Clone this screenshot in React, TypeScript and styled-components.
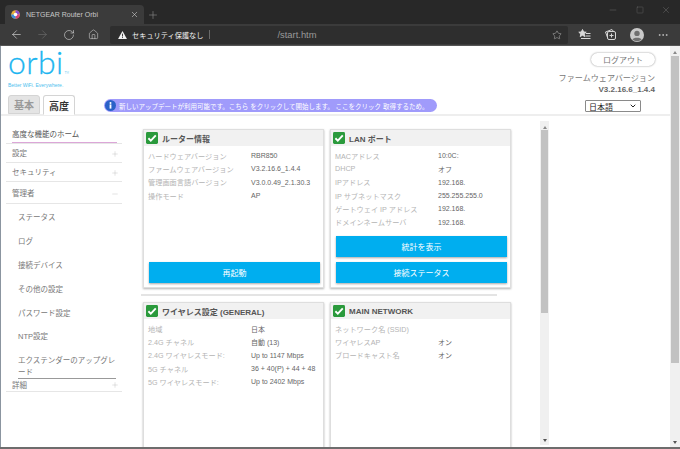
import * as React from 'react';
import styled, { createGlobalStyle } from 'styled-components';
import { ArrowLeft, ArrowRight, ChevronDown, Home, Minus, MoreHorizontal, Plus, RotateCw, Square, Star, X } from 'lucide-react';

const GlobalStyle = createGlobalStyle`
    html, body {
        margin: 0;
        padding: 0;
        background: #fff;
        overflow: hidden;
    }
    * {
        box-sizing: border-box;
    }
    body {
        font-family: 'Liberation Sans', 'Noto Sans CJK JP', sans-serif;
    }
`;

type Row = { label: string; value?: string };

const routerRows: Row[] = [
    { label: 'ハードウェアバージョン', value: 'RBR850' },
    { label: 'ファームウェアバージョン', value: 'V3.2.16.6_1.4.4' },
    { label: '管理画面言語バージョン', value: 'V3.0.0.49_2.1.30.3' },
    { label: '操作モード', value: 'AP' },
];

const lanRows: Row[] = [
    { label: 'MACアドレス', value: '10:0C:' },
    { label: 'DHCP', value: 'オフ' },
    { label: 'IPアドレス', value: '192.168.' },
    { label: 'IP サブネットマスク', value: '255.255.255.0' },
    { label: 'ゲートウェイ IP アドレス', value: '192.168.' },
    { label: 'ドメインネームサーバ', value: '192.168.' },
];

const wirelessRows: Row[] = [
    { label: '地域', value: '日本' },
    { label: '2.4G チャネル', value: '自動 (13)' },
    { label: '2.4G ワイヤレスモード:', value: 'Up to 1147 Mbps' },
    { label: '5G チャネル', value: '36 + 40(P) + 44 + 48' },
    { label: '5G ワイヤレスモード:', value: 'Up to 2402 Mbps' },
];

const networkRows: Row[] = [
    { label: 'ネットワーク名 (SSID)' },
    { label: 'ワイヤレスAP', value: 'オン' },
    { label: 'ブロードキャスト名', value: 'オン' },
];

const adminItems = ['ステータス', 'ログ', '接続デバイス', 'その他の設定', 'パスワード設定', 'NTP設定'];

const CheckBadge: React.FC = () => (
    <svg width="12" height="12" viewBox="0 0 13 13">
        <rect width="13" height="13" rx="1.5" fill="#2a9a3c" />
        <path d="M2.6 6.8 L5.2 9.4 L10.6 3.6" fill="none" stroke="#fff" strokeWidth="2" />
    </svg>
);

const Favicon: React.FC = () => (
    <svg width="9" height="9" viewBox="0 0 10 10">
        <circle cx="5" cy="5" r="4.8" fill="#e9b13c" />
        <path d="M5 5 L5 0.2 A4.8 4.8 0 0 1 9.8 5 Z" fill="#8a4fd0" />
        <path d="M5 5 L9.8 5 A4.8 4.8 0 0 1 5 9.8 Z" fill="#d8437c" />
        <path d="M5 5 L5 9.8 A4.8 4.8 0 0 1 0.2 5 Z" fill="#3c8fe0" />
        <circle cx="5" cy="5" r="2" fill="#fff" />
    </svg>
);

const FavoritesIcon: React.FC = () => (
    <svg width="13" height="13" viewBox="0 0 13 13" fill="none" stroke="#d6d6d6" strokeWidth="1">
        <path d="M4.5 1.5 L5.6 4 L8.2 4.2 L6.2 6 L6.8 8.6 L4.5 7.2 L2.2 8.6 L2.8 6 L0.8 4.2 L3.4 4 Z" fill="#d6d6d6" />
        <path d="M8 5.5 H12.5 M7.5 8 H12.5 M3 10.5 H12.5" />
    </svg>
);

const CollectionsIcon: React.FC = () => (
    <svg width="13" height="13" viewBox="0 0 13 13" fill="none" stroke="#d6d6d6" strokeWidth="1">
        <rect x="3.5" y="3.5" width="8" height="8" rx="1.5" />
        <path d="M3.5 9.5 L1.5 4 L8 1.5 L9.5 3.5" />
        <path d="M7.5 5.5 V9.5 M5.5 7.5 H9.5" />
    </svg>
);

const Avatar: React.FC = () => (
    <svg width="14" height="14" viewBox="0 0 14 14">
        <circle cx="7" cy="7" r="7" fill="#c9c9c9" />
        <circle cx="7" cy="5.4" r="2.7" fill="#6f6f6f" />
        <path d="M2.4 11.6 C3.4 9 10.6 9 11.6 11.6 A7 7 0 0 1 2.4 11.6 Z" fill="#6f6f6f" />
    </svg>
);

const InfoDot: React.FC = () => (
    <InfoDotSvg viewBox="0 0 11 11">
        <circle cx="5.5" cy="5.5" r="5.5" fill="#2a62c8" />
        <circle cx="5.5" cy="2.9" r="1" fill="#fff" />
        <rect x="4.6" y="4.4" width="1.8" height="4.2" fill="#fff" />
    </InfoDotSvg>
);

const InfoCard: React.FC<{ title: string; rows: Row[]; actions?: string[]; tall?: boolean }> = ({ title, rows, actions, tall }) => (
    <Card $tall={tall}>
        <CardHeader>
            <CheckBadge />
            <CardTitle>{title}</CardTitle>
        </CardHeader>
        <CardRows>
            {rows.map(r => (
                <InfoRow key={r.label}>
                    <InfoLabel>{r.label}</InfoLabel>
                    <InfoValue>{r.value}</InfoValue>
                </InfoRow>
            ))}
        </CardRows>
        {actions && (
            <CardActions>
                {actions.map(a => (
                    <ActionButton key={a}>{a}</ActionButton>
                ))}
            </CardActions>
        )}
    </Card>
);

const App: React.FC = () => (
    <Window>
        <GlobalStyle />
        <TabStrip>
            <Tab>
                <Favicon />
                <TabTitle>NETGEAR Router Orbi</TabTitle>
                <X size={9} color="#d0d0d0" strokeWidth={1.6} />
            </Tab>
            <NewTab>
                <Plus size={12} strokeWidth={1.2} />
            </NewTab>
            <WindowControls>
                <Minus size={10} strokeWidth={1} />
                <Square size={8} strokeWidth={1} />
                <X size={10} strokeWidth={1} />
            </WindowControls>
        </TabStrip>
        <Toolbar>
            <NavButtons>
                <ArrowLeft size={13} strokeWidth={1.2} />
                <DimIcon>
                    <ArrowRight size={13} strokeWidth={1.2} />
                </DimIcon>
                <RotateCw size={12} strokeWidth={1.2} />
                <Home size={11} strokeWidth={1.2} />
            </NavButtons>
            <AddressBar>
                <WarnIcon viewBox="0 0 10 9">
                    <path d="M5 0 L10 9 H0 Z" fill="#f2f2f2" />
                    <rect x="4.5" y="3" width="1" height="3.2" fill="#2b2b2b" />
                    <rect x="4.5" y="6.9" width="1" height="1" fill="#2b2b2b" />
                </WarnIcon>
                <SecurityText>セキュリティ保護なし</SecurityText>
                <AddressDivider />
                <UrlText>/start.htm</UrlText>
                <Star size={10} color="#bdbdbd" strokeWidth={1.2} />
            </AddressBar>
            <ToolIcons>
                <FavoritesIcon />
                <CollectionsIcon />
                <Avatar />
                <MoreHorizontal size={12} strokeWidth={1.4} />
            </ToolIcons>
        </Toolbar>
        <Viewport>
            <Page>
                <Header>
                    <HeaderTop>
                        <Brand>
                            <Logo>
                                orbi<LogoMark>TM</LogoMark>
                            </Logo>
                            <Tagline>Better WiFi. Everywhere.</Tagline>
                        </Brand>
                        <Account>
                            <LogoutButton>ログアウト</LogoutButton>
                            <FirmwareLabel>ファームウェアバージョン</FirmwareLabel>
                            <FirmwareValue>V3.2.16.6_1.4.4</FirmwareValue>
                        </Account>
                    </HeaderTop>
                    <HeaderBottom>
                        <Tabs>
                            <ModeTab>基本</ModeTab>
                            <ModeTab $active>高度</ModeTab>
                        </Tabs>
                        <Notice>
                            <InfoDot />
                            <NoticeText>新しいアップデートが利用可能です。こちら をクリックして開始します。 ここをクリック 取得するため。</NoticeText>
                        </Notice>
                        <LanguageSelect>
                            日本語
                            <ChevronDown size={8} strokeWidth={3} color="#222" />
                        </LanguageSelect>
                    </HeaderBottom>
                </Header>
                <Body>
                    <Sidebar>
                        <HomeItem>
                            <span>高度な機能のホーム</span>
                        </HomeItem>
                        <MenuGroup>
                            設定
                            <Plus size={8} strokeWidth={1} />
                        </MenuGroup>
                        <MenuGroup>
                            セキュリティ
                            <Plus size={8} strokeWidth={1} />
                        </MenuGroup>
                        <MenuGroup $open>
                            管理者
                            <Minus size={8} strokeWidth={1} />
                        </MenuGroup>
                        <SubList>
                            {adminItems.map(item => (
                                <SubItem key={item}>{item}</SubItem>
                            ))}
                            <LastSubItem>エクステンダーのアップグレード</LastSubItem>
                        </SubList>
                        <MenuGroup $compact>
                            詳細
                            <Plus size={8} strokeWidth={1} />
                        </MenuGroup>
                    </Sidebar>
                    <Content>
                        <CardRow>
                            <InfoCard title="ルーター情報" rows={routerRows} actions={['再起動']} />
                            <InfoCard title="LAN ポート" rows={lanRows} actions={['統計を表示', '接続ステータス']} />
                        </CardRow>
                        <RowDivider />
                        <CardRow>
                            <InfoCard title="ワイヤレス設定 (GENERAL)" rows={wirelessRows} tall />
                            <InfoCard title="MAIN NETWORK" rows={networkRows} tall />
                        </CardRow>
                    </Content>
                    <InnerScrollbar>
                        <ArrowUp />
                        <InnerThumb />
                        <ArrowDown />
                    </InnerScrollbar>
                </Body>
            </Page>
            <OuterScrollbar>
                <ArrowUp />
                <OuterThumb />
                <ArrowDown />
            </OuterScrollbar>
        </Viewport>
    </Window>
);

export default App;

const Window = styled.div`
    width: 680px;
    height: 449px;
    display: flex;
    flex-direction: column;
    overflow: hidden;
    background: #fff;
    border-bottom: 2px solid #6d6d6d;
`;

const TabStrip = styled.div`
    height: 24px;
    flex: none;
    display: flex;
    align-items: flex-end;
    padding-left: 5px;
    background: #282828;
`;

const Tab = styled.div`
    width: 139px;
    height: 19px;
    display: flex;
    align-items: center;
    padding: 0 5px 0 6px;
    background: #3b3b3b;
    border-radius: 4px 4px 0 0;
`;

const TabTitle = styled.span`
    flex: 1;
    margin-left: 6px;
    font-size: 7px;
    color: #c8c8c8;
    white-space: nowrap;
`;

const NewTab = styled.div`
    height: 19px;
    display: flex;
    align-items: center;
    margin-left: 3px;
    color: #8f8f8f;
`;

const WindowControls = styled.div`
    margin-left: auto;
    margin-right: 9px;
    height: 24px;
    width: 63px;
    padding-bottom: 4px;
    display: flex;
    align-items: center;
    justify-content: space-between;
    color: #7d7d7d;
`;

const Toolbar = styled.div`
    height: 22px;
    flex: none;
    display: flex;
    align-items: center;
    background: #3b3b3b;
    border-bottom: 1px solid #555;
`;

const NavButtons = styled.div`
    width: 110px;
    padding: 0 11px 0 10px;
    display: flex;
    align-items: center;
    justify-content: space-between;
    color: #d8d8d8;
`;

const DimIcon = styled.span`
    display: flex;
    color: #6c6c6c;
`;

const AddressBar = styled.div`
    width: 458px;
    height: 18px;
    display: flex;
    align-items: center;
    padding: 0 6px 0 8px;
    background: #2e2e2e;
    border-radius: 2px;
`;

const WarnIcon = styled.svg`
    width: 9px;
    height: 8px;
    flex: none;
`;

const SecurityText = styled.span`
    margin-left: 5px;
    font-size: 7.2px;
    color: #f0f0f0;
    white-space: nowrap;
`;

const AddressDivider = styled.span`
    width: 1px;
    height: 9px;
    margin-left: 6px;
    background: #6a6a6a;
`;

const UrlText = styled.span`
    flex: 1;
    margin-left: 67px;
    font-size: 9.4px;
    color: #9a9a9a;
`;

const ToolIcons = styled.div`
    flex: 1;
    display: flex;
    align-items: center;
    justify-content: space-between;
    padding: 0 11px 0 10px;
    color: #cfcfcf;
`;

const Viewport = styled.div`
    flex: 1;
    min-height: 0;
    display: flex;
    border-left: 1px solid #8b95a0;
`;

const Page = styled.div`
    flex: 1;
    min-width: 0;
    display: flex;
    flex-direction: column;
`;

const Header = styled.header`
    height: 74px;
    flex: none;
`;

const HeaderTop = styled.div`
    height: 49px;
    display: flex;
    justify-content: space-between;
    padding: 7px 15px 0 7px;
`;

const Brand = styled.div`
    margin-top: -3px;
    display: flex;
    flex-direction: column;
`;

const Logo = styled.div`
    height: 29px;
    font-family: Lato, 'Liberation Sans', sans-serif;
    font-size: 32px;
    font-weight: 300;
    line-height: 24px;
    letter-spacing: 0.4px;
    color: #1cb5f0;
    -webkit-text-stroke: 0.3px #1cb5f0;
`;

const LogoMark = styled.span`
    margin-left: 1px;
    font-size: 3px;
    letter-spacing: 0;
    -webkit-text-stroke: 0;
`;

const Tagline = styled.div`
    margin-top: 3px;
    font-size: 5px;
    color: #4cc0ee;
`;

const Account = styled.div`
    display: flex;
    flex-direction: column;
    align-items: flex-end;
`;

const LogoutButton = styled.div`
    width: 64px;
    height: 13px;
    display: flex;
    align-items: center;
    justify-content: center;
    font-size: 8px;
    color: #777;
    background: #fff;
    border-radius: 7px;
    box-shadow: 0 0 2px #888;
`;

const FirmwareLabel = styled.div`
    margin-top: 6px;
    font-size: 8.1px;
    color: #777;
`;

const FirmwareValue = styled.div`
    margin-top: 2px;
    font-size: 8px;
    font-weight: bold;
    color: #666;
`;

const HeaderBottom = styled.div`
    height: 21px;
    display: flex;
    align-items: flex-start;
    padding-left: 7px;
    border-bottom: 2px solid #eeeeee;
`;

const Tabs = styled.div`
    display: flex;
    gap: 3px;
`;

const ModeTab = styled.div<{ $active?: boolean }>`
    width: 32px;
    height: ${p => (p.$active ? '20px' : '19px')};
    display: flex;
    align-items: center;
    justify-content: center;
    font-size: 10px;
    font-weight: bold;
    color: ${p => (p.$active ? '#333' : '#999')};
    background: ${p => (p.$active ? '#fff' : '#e4e4e4')};
    border: 1px solid #d4d4d4;
    border-bottom-color: ${p => (p.$active ? '#fff' : '#d4d4d4')};
    border-radius: 3px 3px 0 0;
`;

const Notice = styled.div`
    width: 333px;
    height: 13px;
    margin: 4px 0 0 29px;
    display: flex;
    align-items: center;
    background: #a09bfb;
    border-radius: 7px;
`;

const InfoDotSvg = styled.svg`
    width: 11px;
    height: 11px;
    flex: none;
    margin-left: 1px;
`;

const NoticeText = styled.span`
    margin-left: 3px;
    font-size: 6.5px;
    color: #fff;
    white-space: nowrap;
`;

const LanguageSelect = styled.div`
    width: 56px;
    height: 12px;
    margin: 5px 0 0 148px;
    padding: 0 3px;
    display: flex;
    align-items: center;
    justify-content: space-between;
    font-size: 8px;
    color: #222;
    background: #fff;
    border: 1px solid #8a8a8a;
    border-radius: 1px;
`;

const Body = styled.div`
    flex: 1;
    min-height: 0;
    display: flex;
`;

const Sidebar = styled.nav`
    width: 116px;
    flex: none;
    margin-left: 5px;
    font-size: 7.5px;
    color: #777;
`;

const HomeItem = styled.div`
    height: 24px;
    padding: 9px 5px 0 6px;
    border-bottom: 1px solid #e6e6e6;
    color: #555;

    span {
        display: block;
        height: 14px;
        line-height: 11px;
        white-space: nowrap;
        border-bottom: 1px solid #dca6d8;
    }
`;

const MenuGroup = styled.div<{ $open?: boolean; $compact?: boolean }>`
    height: ${p => (p.$open ? '22px' : p.$compact ? '13px' : '19px')};
    display: flex;
    align-items: ${p => (p.$compact ? 'flex-start' : 'center')};
    justify-content: space-between;
    padding: 0 3px ${p => (p.$open || p.$compact ? '0' : '1px')} 6px;
    border-bottom: 1px solid #e6e6e6;

    svg {
        color: #aaa;
        margin-top: 2px;
    }
`;

const SubList = styled.div`
    padding-top: 1px;
`;

const SubItem = styled.div`
    height: 23.8px;
    display: flex;
    align-items: center;
    padding-left: 12px;
    color: #777;
`;

const LastSubItem = styled.div`
    height: 24px;
    margin: 7px 6px 0 12px;
    line-height: 12px;
    color: #777;
    border-bottom: 1px solid #999;
`;

const Content = styled.main`
    flex: 1;
    min-width: 0;
    padding: 9px 0 0 21px;
    overflow: hidden;
`;

const CardRow = styled.div`
    display: flex;
    gap: 6px;
`;

const RowDivider = styled.div`
    width: 356px;
    height: 2px;
    margin: 6px 0 6px -2px;
    background: #e4e4e4;
`;

const Card = styled.section<{ $tall?: boolean }>`
    width: 181px;
    height: ${p => (p.$tall ? '200px' : '159px')};
    flex: none;
    display: flex;
    flex-direction: column;
    border: 1px solid #dedede;
    box-shadow: 0 1px 2px rgba(0, 0, 0, 0.3);
    background: #fff;
`;

const CardHeader = styled.div`
    height: 16px;
    flex: none;
    display: flex;
    align-items: center;
    padding-left: 2px;
    background: #f1f1f1;
`;

const CardTitle = styled.h2`
    margin: 0 0 0 4px;
    font-size: 8px;
    font-weight: bold;
    color: #555;
`;

const CardRows = styled.div`
    flex: 1;
    padding: 3px 0 0 4px;
`;

const InfoRow = styled.div`
    display: grid;
    grid-template-columns: 103px 1fr;
    height: 13.33px;
    align-items: center;
    font-size: 7.2px;
    white-space: nowrap;
`;

const InfoLabel = styled.span`
    color: #b4b4b4;
`;

const InfoValue = styled.span`
    font-size: 7px;
    color: #666;
`;

const CardActions = styled.div`
    display: flex;
    flex-direction: column;
    gap: 5px;
    padding: 0 3px 4px 5px;
`;

const ActionButton = styled.div`
    height: 21px;
    display: flex;
    align-items: center;
    justify-content: center;
    font-size: 8px;
    color: #fff;
    background: #00aeef;
    box-shadow: 0 1px 2px rgba(0, 0, 0, 0.35);
`;

const InnerScrollbar = styled.div`
    width: 9px;
    flex: none;
    margin: 1px 121px 0 0;
    height: 324px;
    display: flex;
    flex-direction: column;
    background: #f0f0f0;
`;

const InnerThumb = styled.div`
    height: 183px;
    margin: 1px 1px 0;
    background: #c2c2c2;
`;

const OuterScrollbar = styled.div`
    width: 10px;
    flex: none;
    display: flex;
    flex-direction: column;
    background: #f0f0f0;
`;

const OuterThumb = styled.div`
    height: 307px;
    margin: 2px 1px 0;
    background: #c2c2c2;
`;

const ArrowUp = styled.div`
    height: 5px;
    width: 0;
    margin: 3px auto 0;
    border-left: 2.5px solid transparent;
    border-right: 2.5px solid transparent;
    border-bottom: 3px solid #8a8a8a;
`;

const ArrowDown = styled.div`
    width: 0;
    height: 3px;
    margin: auto auto 3px;
    border-left: 2.5px solid transparent;
    border-right: 2.5px solid transparent;
    border-top: 3px solid #555;
`;
